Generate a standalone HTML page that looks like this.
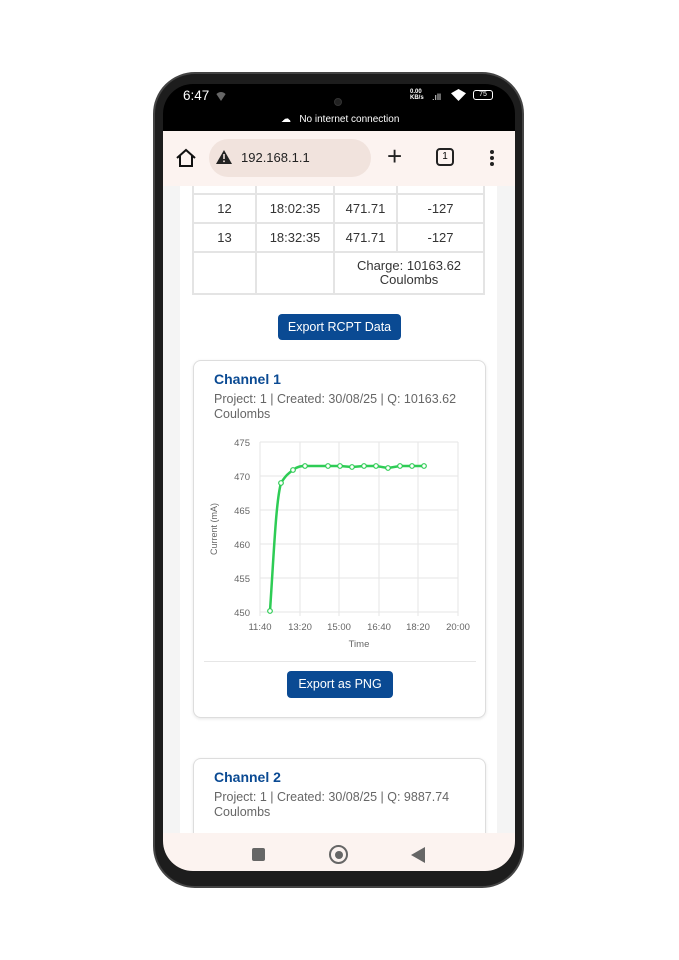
<!DOCTYPE html>
<html><head><meta charset="utf-8"><style>
*{box-sizing:border-box;margin:0;padding:0}
body{width:679px;height:960px;background:#fff;position:relative;overflow:hidden;font-family:"Liberation Sans",sans-serif}
.phone{position:absolute;left:153px;top:72px;width:371px;height:816px;background:#1d1d1d;border-radius:42px;border:2px solid #444}
.screen{position:absolute;left:163px;top:84px;width:352px;height:787px;border-radius:30px;overflow:hidden;background:#000}
.abs{position:absolute}
.bar{position:absolute;left:0;top:47px;width:352px;height:55px;background:#fcf3f0}
.page{position:absolute;left:0;top:102px;width:352px;height:647px;background:#f4f4f4;overflow:hidden}
.inner{position:absolute;left:17px;top:0;width:317px;height:647px;background:#fff}
.nav{position:absolute;left:0;top:749px;width:352px;height:38px;background:#fcf3f0}
table{border-collapse:collapse;position:absolute;left:12px;top:-22px;font-size:13px;color:#333}
td{border:2px solid #e4e4e4;text-align:center;height:29px}
.btn{position:absolute;background:#0a4a93;color:#fff;font-size:12.5px;border-radius:4px;text-align:center}
.card{position:absolute;left:13px;width:293px;border:1px solid #ddd;border-radius:8px;background:#fff;box-shadow:0 1px 3px rgba(0,0,0,.1)}
.h{position:absolute;left:20px;color:#0a4a93;font-weight:bold;font-size:14px}
.m{position:absolute;left:20px;color:#666;font-size:12.5px;line-height:15px}
</style></head><body>
<div class="phone"></div>
<div class="screen">
 <div class="abs" style="left:20px;top:4px;color:#fff;font-size:13.5px">6:47</div>
 <div class="abs" style="left:52px;top:8px;width:12px;height:9px;background:#666;border-radius:6px 6px 0 0;clip-path:polygon(0 0,100% 0,50% 100%)"></div>
 <div class="abs" style="left:171px;top:14px;width:8px;height:8px;border-radius:50%;background:#222;border:1px solid #333"></div>
 <div class="abs" style="left:247px;top:5px;color:#fff;font-size:6px;line-height:6px;font-weight:bold">0.00<br>KB/s</div>
 <div class="abs" style="left:269px;top:8px;color:#fff;font-size:9px">.ıll</div>
 <div class="abs" style="left:288px;top:5px;width:15px;height:12px;background:#fff;clip-path:polygon(0 35%,50% 0,100% 35%,50% 100%)"></div>
 <div class="abs" style="left:310px;top:6px;width:20px;height:10px;border:1.5px solid #fff;border-radius:3px;color:#fff;font-size:7px;text-align:center;line-height:7px">75</div>
 <div class="abs" style="left:118px;top:30px;color:#fff;font-size:10px">☁&nbsp;&nbsp; No internet connection</div>
 <div class="bar">
  <svg class="abs" style="left:12px;top:17px" width="22" height="20"><path d="M2 10 L11 2 L20 10 M5 8 V18 H17 V8" fill="none" stroke="#111" stroke-width="2"/></svg>
  <div class="abs" style="left:46px;top:8px;width:162px;height:38px;border-radius:19px;background:#f1e3dd"></div>
  <svg class="abs" style="left:53px;top:19px" width="16" height="14"><path d="M8 0 L16 14 H0Z" fill="#222"/><rect x="7.2" y="4" width="1.6" height="5" fill="#f1e3dd"/><rect x="7.2" y="10.5" width="1.6" height="1.6" fill="#f1e3dd"/></svg>
  <div class="abs" style="left:78px;top:19px;font-size:13px;color:#222">192.168.1.1</div>
  <div class="abs" style="left:224px;top:10px;font-size:26px;color:#222;font-weight:300">+</div>
  <div class="abs" style="left:273px;top:17px;width:18px;height:18px;border:2px solid #222;border-radius:4px;font-size:10px;text-align:center;line-height:14px">1</div>
  <div class="abs" style="left:327px;top:19px;width:4px;height:4px;border-radius:2px;background:#222;box-shadow:0 6px 0 #222,0 12px 0 #222"></div>
 </div>
 <div class="page"><div class="inner">
  <table>
   <tr><td style="width:63px"></td><td style="width:78px"></td><td style="width:63px"></td><td style="width:87px"></td></tr>
   <tr><td>12</td><td>18:02:35</td><td>471.71</td><td>-127</td></tr>
   <tr><td>13</td><td>18:32:35</td><td>471.71</td><td>-127</td></tr>
   <tr><td style="height:42px"></td><td></td><td colspan="2" style="line-height:14px">Charge: 10163.62<br>Coulombs</td></tr>
  </table>
  <div class="btn" style="left:98px;top:128px;width:123px;height:26px;line-height:26px">Export RCPT Data</div>
  <div class="card" style="top:174px;height:358px">
   <div class="h" style="top:10px">Channel 1</div>
   <div class="m" style="top:31px">Project: 1 | Created: 30/08/25 | Q: 10163.62<br>Coulombs</div>
   <svg class="abs" style="left:0;top:70px" width="293" height="220" font-family="Liberation Sans" font-size="9.5" fill="#666">
    <g stroke="#e6e6e6" stroke-width="1">
     <line x1="66" y1="11" x2="264" y2="11"/><line x1="66" y1="45" x2="264" y2="45"/><line x1="66" y1="79" x2="264" y2="79"/><line x1="66" y1="113" x2="264" y2="113"/><line x1="66" y1="147" x2="264" y2="147"/><line x1="66" y1="181" x2="264" y2="181"/>
     <line x1="66" y1="11" x2="66" y2="185"/><line x1="106" y1="11" x2="106" y2="185"/><line x1="145" y1="11" x2="145" y2="185"/><line x1="185" y1="11" x2="185" y2="185"/><line x1="224" y1="11" x2="224" y2="185"/><line x1="264" y1="11" x2="264" y2="185"/>
    </g>
    <g text-anchor="end"><text x="56" y="15">475</text><text x="56" y="49">470</text><text x="56" y="83">465</text><text x="56" y="117">460</text><text x="56" y="151">455</text><text x="56" y="185">450</text></g>
    <g text-anchor="middle"><text x="66" y="199">11:40</text><text x="106" y="199">13:20</text><text x="145" y="199">15:00</text><text x="185" y="199">16:40</text><text x="224" y="199">18:20</text><text x="264" y="199">20:00</text><text x="165" y="216">Time</text></g>
    <text transform="translate(23,98) rotate(-90)" text-anchor="middle" font-size="9">Current (mA)</text>
    <path d="M76 180 C80 120 82 70 87 52 C92 44 95 42 99 39 C104 35 108 35 111 35 L134 35 L146 35 L158 36 L170 35 L182 35 L194 37 L206 35 L218 35 L230 35" fill="none" stroke="#2ecc55" stroke-width="2.5"/>
    <g fill="#fff" stroke="#2ecc55" stroke-width="1.2"><circle cx="76" cy="180" r="2.3"/><circle cx="87" cy="52" r="2.3"/><circle cx="99" cy="39" r="2.3"/><circle cx="111" cy="35" r="2.3"/><circle cx="134" cy="35" r="2.3"/><circle cx="146" cy="35" r="2.3"/><circle cx="158" cy="36" r="2.3"/><circle cx="170" cy="35" r="2.3"/><circle cx="182" cy="35" r="2.3"/><circle cx="194" cy="37" r="2.3"/><circle cx="206" cy="35" r="2.3"/><circle cx="218" cy="35" r="2.3"/><circle cx="230" cy="35" r="2.3"/></g>
   </svg>
   <div class="abs" style="left:10px;top:300px;width:272px;height:1px;background:#e6e6e6"></div>
   <div class="btn" style="left:93px;top:310px;width:106px;height:27px;line-height:27px">Export as PNG</div>
  </div>
  <div class="card" style="top:572px;height:100px">
   <div class="h" style="top:10px">Channel 2</div>
   <div class="m" style="top:31px">Project: 1 | Created: 30/08/25 | Q: 9887.74<br>Coulombs</div>
  </div>
 </div></div>
 <div class="nav">
  <div class="abs" style="left:89px;top:15px;width:13px;height:13px;background:#666;border-radius:2px"></div>
  <div class="abs" style="left:166px;top:12px;width:19px;height:19px;border:2px solid #666;border-radius:50%"><div style="margin:3.5px;width:8px;height:8px;border-radius:50%;background:#666"></div></div>
  <div class="abs" style="left:248px;top:14px;width:14px;height:16px;background:#666;clip-path:polygon(0 50%,100% 0,100% 100%)"></div>
 </div>
</div>
</body></html>
